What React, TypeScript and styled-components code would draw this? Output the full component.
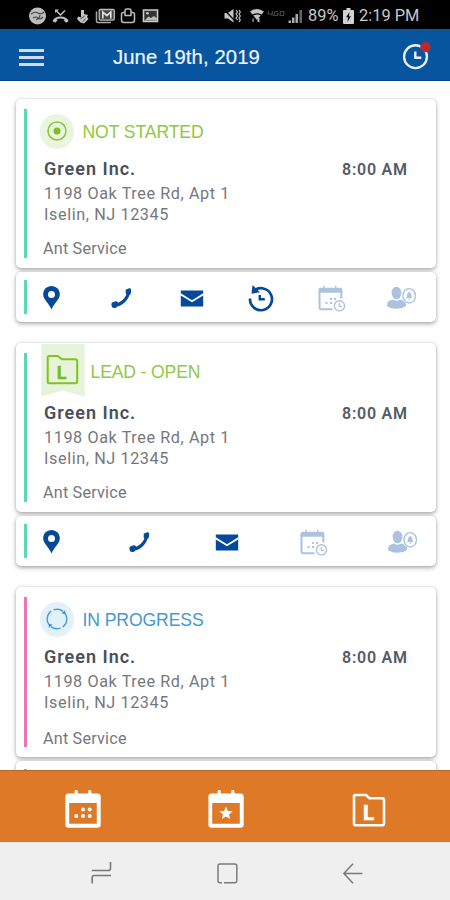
import React from 'react';
import styled, { createGlobalStyle } from 'styled-components';

const GlobalStyle = createGlobalStyle`
  * { box-sizing: border-box; }
  body { margin: 0; background: #fefefe; font-family: Roboto, sans-serif; }
  svg { display: block; flex: none; overflow: visible; }
`;

const Screen = styled.div`
  width: 450px;
  height: 900px;
  display: flex;
  flex-direction: column;
  overflow: hidden;
  background: #fefefe;
`;

const StatusBar = styled.div`
  flex: none;
  height: 29px;
  padding: 2px 30px 0 29px;
  background: #000;
  color: #c8c8c8;
  display: flex;
  align-items: center;
  justify-content: space-between;
`;

const StatusGroup = styled.div<{ $gap?: number }>`
  margin-left: ${(p) => p.$gap ?? 0}px;
  display: flex;
  align-items: center;
`;

const StatusText = styled.span<{ $width: number; $gap: number }>`
  width: ${(p) => p.$width}px;
  margin-left: ${(p) => p.$gap}px;
  font-size: 16.4px;
  line-height: 20px;
  white-space: nowrap;
`;

const Header = styled.header`
  flex: none;
  height: 52px;
  padding: 0 19px 0 19px;
  display: flex;
  align-items: center;
  background: #08559f;
  border-bottom: 1px solid #064686;
`;

const MenuButton = styled.button`
  width: 25px;
  height: 17px;
  margin-top: 6px;
  padding: 0;
  border: 0;
  background: none;
  display: flex;
  flex-direction: column;
  justify-content: space-between;
`;

const MenuLine = styled.span`
  height: 3px;
  background: #cfdcf1;
`;

const Title = styled.h1`
  flex: 1;
  margin: 4px 0 0 69px;
  color: #eef4fc;
  font: 400 20.3px/26px "Liberation Sans", Arial, sans-serif;
  -webkit-text-stroke: 0.2px #eef4fc;
  letter-spacing: 0.1px;
`;

const List = styled.main`
  flex: 1;
  min-height: 0;
  overflow: hidden;
  padding: 18px 14px 0 16px;
`;

const Job = styled.article`
  margin-bottom: 21px;
`;

const Panel = styled.section`
  background: #fff;
  border-radius: 5px;
  box-shadow: 0 2px 4px rgba(0, 0, 0, 0.3), 0 0 3px rgba(0, 0, 0, 0.12);
  display: flex;
`;

const Details = styled(Panel)<{ $height: number }>`
  height: ${(p) => p.$height}px;
  padding: 10px 29px 10px 8px;
`;

const Accent = styled.span<{ $color: string }>`
  width: 3px;
  flex: none;
  background: ${(p) => p.$color};
`;

const Body = styled.div`
  flex: 1;
  padding-left: 16px;
  display: flex;
  flex-direction: column;
`;

const StatusRow = styled.div<{ $ribbon: boolean }>`
  height: 44px;
  margin: ${(p) => (p.$ribbon ? '-10px 0 10px -2px' : '0')};
  display: flex;
  align-items: ${(p) => (p.$ribbon ? 'flex-start' : 'center')};
`;

const StatusLabel = styled.span<{ $color: string; $ribbon: boolean; $spacing: number }>`
  margin: ${(p) => (p.$ribbon ? '18px 0 0 5.5px' : '1px 0 0 8.5px')};
  color: ${(p) => p.$color};
  font: 400 17.6px/22px "Liberation Sans", Arial, sans-serif;
  letter-spacing: ${(p) => p.$spacing}px;
`;

const Badge = styled.span<{ $color: string }>`
  width: 34px;
  height: 35px;
  margin-left: -3px;
  border-radius: 50%;
  background: ${(p) => p.$color};
  display: flex;
  align-items: center;
  justify-content: center;
`;

const NameRow = styled.div`
  height: 22px;
  margin-top: 6px;
  padding-left: 1px;
  display: flex;
  align-items: center;
  justify-content: space-between;
`;

const Customer = styled.span`
  margin-top: -2px;
  color: #48505a;
  font-size: 18px;
  font-weight: 600;
  line-height: 22px;
  letter-spacing: 1px;
`;

const Time = styled.span`
  color: #555b62;
  font-size: 16px;
  font-weight: 600;
  line-height: 22px;
  letter-spacing: 0.75px;
  margin-right: -0.75px;
`;

const Address = styled.div`
  margin-top: 2px;
  padding-left: 1px;
  color: #74787d;
  font-size: 16.2px;
  line-height: 21.4px;
  letter-spacing: 0.6px;
`;

const Service = styled.div<{ $drop: number }>`
  margin-top: auto;
  margin-bottom: ${(p) => -p.$drop}px;
  color: #74787d;
  font-size: 16.2px;
  line-height: 20px;
  letter-spacing: 0.2px;
`;

const Actions = styled(Panel)`
  height: 50px;
  margin-top: 4px;
  padding: 8px 19px 8px 8px;
`;

const ActionRow = styled.div`
  flex: 1;
  margin: 2px 0 0 9.5px;
  display: flex;
  align-items: center;
  justify-content: space-between;
`;

const Action = styled.button`
  width: 30px;
  height: 34px;
  padding: 0;
  border: 0;
  background: none;
  display: flex;
  align-items: center;
  justify-content: center;
`;

const TabBar = styled.nav`
  flex: none;
  height: 72px;
  padding: 7px 64px 0 65px;
  background: #de7927;
  border-top: 1px solid #b96a2b;
  border-bottom: 1px solid #cf741f;
  display: grid;
  grid-template-columns: 142.5px 144.5px 34px;
  align-items: center;
`;

const SystemNav = styled.nav`
  flex: none;
  height: 58px;
  padding: 4px 86px 0 91px;
  background: #efefef;
  display: grid;
  grid-template-columns: 126px 126px 20px;
  align-items: center;
`;

const BLUE = '#06499b';
const PALE = '#acc3df';

const PinIcon = () => (
  <svg width="17" height="24" viewBox="0 0 17 24">
    <path fill={BLUE} fillRule="evenodd" d="M8.5 0C3.8 0 .2 3.6.2 8.2c0 5.4 5.3 8.2 8.3 15.3 3-7.1 8.3-9.900 8.300-15.300C16.800 3.600 13.200 0 8.500 0zm0 4.900a3.500 3.500 0 1 1 0 7 3.500 3.500 0 0 1 0-7z" />
  </svg>
);

const PhoneIcon = () => (
  <svg width="21" height="21" viewBox="0 0 21 21">
    <path d="M3.200 17.100C10 17.300 17.300 10.500 17.400 3.600" fill="none" stroke={BLUE} strokeWidth="3.200" />
    <path d="M1.700 14.200 4.700 13.300q1.200-.2 1.900.7l1.500 2-3 3.800Q2.500 20.300 1 19.300L.4 16.500Q.3 14.700 1.700 14.200z" fill={BLUE} />
    <path d="m14.500 1.700 3.700-1.400q1.500-.3 1.900 1.300.4 2.600-.8 5.200l-3.200.2-1.300-1.700q-.6-.9.100-1.800z" fill={BLUE} />
  </svg>
);

const MailIcon = () => (
  <svg width="24" height="17" viewBox="0 0 24 17">
    <path fill={BLUE} d="M.8.500h22.400v2.700L12 10.200.8 3.200z" />
    <path fill={BLUE} d="M.8 5.400 12 12.300l11.200-6.900v11H.8z" />
  </svg>
);

const HistoryIcon = () => (
  <svg width="27" height="28" viewBox="0 0 27 28">
    <path d="M5.900 6.800A11 11 0 1 1 2 14.500" fill="none" stroke={BLUE} strokeWidth="2.700" />
    <path d="M4.600 1 3.500 9.800l8.500-1.500z" fill={BLUE} />
    <path d="M11.800 11v4.300h5" fill="none" stroke={BLUE} strokeWidth="2.500" />
  </svg>
);

const CalendarClockIcon = () => (
  <svg width="28" height="27" viewBox="0 0 28 27">
    <path d="M14.500 24.200H3.200a1.700 1.700 0 0 1-1.700-1.700V5.500M23.300 5.500v8" fill="none" stroke={PALE} strokeWidth="2" />
    <path d="M.6 7.800V4.600Q.6 2.800 2.500 2.800h3V.5h1.300v2.300h10.300V.5h1.200v2.300h3.600q2.400 0 2.400 1.900v3.100z" fill={PALE} />
    <path d="M12 13h2v2h-2zM16 13h2v2h-2zM7.500 17h2v2h-2zM12 17h2v2h-2z" fill={PALE} />
    <circle cx="21.500" cy="20.800" r="5.100" fill="#fff" stroke={PALE} strokeWidth="1.400" />
    <path d="M21.300 18v3.300h2.700" fill="none" stroke={PALE} strokeWidth="1.200" />
  </svg>
);

const PersonIcon = () => (
  <svg width="29" height="24" viewBox="0 0 29 24">
    <ellipse cx="9.500" cy="7" rx="4.900" ry="6.300" fill={PALE} />
    <path d="M.2 20.500v-2.700q.3-2.700 3.600-3.500l2.500-.7q3.200 2.500 6.600 0l3.300 1q2.700 1 2.900 3.300v2Q15 22.800 9.600 22.800T.2 20.500z" fill={PALE} />
    <circle cx="22.200" cy="10" r="7.800" fill="#fff" />
    <ellipse cx="22.200" cy="9.800" rx="6.300" ry="7.200" fill="#fff" stroke={PALE} strokeWidth="1.400" />
    <path d="M18.900 12.300q1.200-1 1.200-3.600 0-2.400 2.100-2.800 2.100.4 2.100 2.800 0 2.600 1.200 3.600zM21.300 13h1.800v.8h-1.800z" fill={PALE} />
  </svg>
);

const TargetIcon = () => (
  <svg width="20" height="20" viewBox="0 0 20 20">
    <circle cx="10" cy="10" r="9" fill="none" stroke="#8cc63f" strokeWidth="1.500" />
    <circle cx="10" cy="10" r="3.500" fill="#79bf22" />
  </svg>
);

const CycleIcon = () => (
  <svg width="22" height="22" viewBox="0 0 22 22">
    <path d="M4.300 18A9.700 9.700 0 0 1 5.200 3.100M17.700 4A9.700 9.700 0 0 1 16.700 19" fill="none" stroke="#4a9ed7" strokeWidth="1.500" />
    <path d="M7.500 1.900q5.200-2 9.700 1.500M14.500 20.100q-5 2-9.600-1.500" fill="none" stroke="#4a9ed7" strokeWidth="1.500" />
    <path d="m19.100 2.200.2 3.800-3.800-.5zM2.700 19.900l.3-4 3.500.6z" fill="#398fc9" />
  </svg>
);

const RibbonIcon = () => (
  <svg width="44" height="54" viewBox="0 0 44 54">
    <path d="M.3 1h43.400v52.500Q32 50.500 22 47.500 12 50.500.3 53.500z" fill="#e8f3dc" />
    <path d="M8.200 13h8.600l4 3.300h13.400q2 0 2 2v20q0 2-2 2h-26q-1.500 0-1.500-1.500V14.500q0-1.500 1.500-1.500z" fill="none" stroke="#7fc41c" strokeWidth="2" />
    <text x="15.800" y="35.500" fill="#72bd22" stroke="#72bd22" strokeWidth=".5" fontFamily="Roboto, sans-serif" fontWeight="700" fontSize="18">L</text>
  </svg>
);

const TabCalendar = ({ star }: { star?: boolean }) => (
  <svg width="36" height="39" viewBox="0 0 36 39">
    <path fill="#fff" fillRule="evenodd" d="M9.600 3.500V1.300q0-1.300 1.600-1.300t1.600 1.300v2.200h10.400V1.300q0-1.300 1.600-1.300t1.600 1.300v2.200h5.900q3.400 0 3.400 3.300v27.700q0 3.300-3.400 3.300H3.700Q.4 37.800.4 34.500V6.800q0-3.300 3.300-3.300zM4.200 13v20.800h27.600V13z" />
    {star ? (
      <path fill="#fff" d="m18 16.500 1.900 4.400 4.700.4-3.600 3.100 1.100 4.700-4.100-2.500-4.100 2.500 1.100-4.700-3.600-3.100 4.700-.4z" />
    ) : (
      <g fill="#fff">
        <circle cx="18" cy="19.600" r="2" /><circle cx="24.700" cy="19.600" r="2" />
        <circle cx="11.300" cy="26" r="2" /><circle cx="18" cy="26" r="2" /><circle cx="24.700" cy="26" r="2" />
      </g>
    )}
  </svg>
);

const TabFolder = () => (
  <svg width="34" height="34" viewBox="0 0 34 34">
    <path d="M3.300 2H14l3.500 3.200H30q2 0 2 2V30.500q0 1.700-1.700 1.700H3.700Q2 32.200 2 30.500V3.500Q2 2 3.300 2z" fill="none" stroke="#fff" strokeWidth="2.600" />
    <text x="11" y="26.500" fill="#fff" stroke="#fff" strokeWidth=".7" fontFamily="Roboto, sans-serif" fontWeight="700" fontSize="20.500">L</text>
  </svg>
);

const ClockIcon = () => (
  <svg width="28" height="28" viewBox="0 0 28 28">
    <circle cx="12.500" cy="15.700" r="11.400" fill="none" stroke="#e6effa" strokeWidth="2.400" />
    <path d="M12.300 10.500v6.300h6" fill="none" stroke="#e6effa" strokeWidth="2.400" />
    <circle cx="22.500" cy="6" r="5.300" fill="#b42c30" />
  </svg>
);

const NotificationIcons = () => (
  <svg width="130" height="18" viewBox="0 0 130 18">
    <circle cx="8.500" cy="9" r="8.500" fill="#bdbdbd" />
    <path d="M2 7q4-3 7-1t6-1M4 11q3-2 5 0t5-1M7 13q4-2 4-5" fill="none" stroke="#444" strokeWidth="1.100" />
    <path d="M27 3.500 31.500 8l4.500-4.500" fill="none" stroke="#c2c2c2" strokeWidth="1.500" />
    <path d="M24.500 14.500q1.500-4 7-4t7 4" fill="none" stroke="#c2c2c2" strokeWidth="2" />
    <path d="m23.800 14 2-2.500 3 1.500-2.500 2.700zM34.500 13l3-1.500 2 2.500-2.500 1.700zM26 2.500h4L26 6z" fill="#c2c2c2" />
    <path d="M52 3h3v4l4 1-1 2 1.500 2-4.500 4.500-3.500-1-3.500-3.500 1.200-2.500 2.800 1z" fill="#c2c2c2" />
    <path d="m51.500 12 4-3M54 14.500l2.500-3" stroke="#444" strokeWidth="1" />
    <path d="M67.500 4.500V14q0 1.500 1.500 1.500h13" fill="none" stroke="#aaa" strokeWidth="1.500" />
    <path d="M71.500 2.500h12.500q1.300 0 1.300 1.300v8q0 1.300-1.300 1.300H71.500q-1.300 0-1.300-1.300v-8q0-1.300 1.300-1.300z" fill="#444" stroke="#bbb" strokeWidth="1.300" />
    <path d="M73.800 11.500V5l4 3.500 4-3.500v6.500" fill="none" stroke="#ddd" strokeWidth="1.700" />
    <path d="M96 5.500h-1.500q-2 0-2 2V13q0 2.500 2.500 2.500h8q2.500 0 2.500-2.500V7.500q0-2-2-2H102M96 8.500V4q0-2 1.500-2h3q1.500 0 1.500 2v4.500z" fill="none" stroke="#bbb" strokeWidth="1.500" />
    <path d="M114.500 3h14v11.500h-14z" fill="#333" stroke="#ccc" strokeWidth="1.600" />
    <path d="m115.500 13.500 4-4 2.500 1.500 3-2 3 2.500v2z" fill="#bbb" /><circle cx="118.500" cy="6.200" r="1.300" fill="#ccc" />
  </svg>
);

const MuteIcon = () => (
  <svg width="17" height="16" viewBox="0 0 17 16">
    <path d="M.5 5h3.500l5.500-4v13.500L4 10.500H.5z" fill="#c4c4c4" />
    <path d="m.5 2 11 11.500" stroke="#000" strokeWidth="1.200" />
    <path d="m12 2 1.500 2-1.500 2 1.500 2-1.500 2 1.500 2M15 2l1.300 2L15 6l1.300 2L15 10l1.300 2-1.300 2" fill="none" stroke="#c4c4c4" strokeWidth="1.200" />
  </svg>
);

const WifiIcon = () => (
  <svg width="14" height="15" viewBox="0 0 14 15">
    <path d="M0 3.500Q7-1.500 14 3.500L11.500 6.500Q7 4 2.500 6.500zM3.300 7.600q3.700-2 7.400 0L7 12z" fill="#c4c4c4" />
    <path d="M3 14v-3.500" stroke="#888" strokeWidth="1.500" />
    <path d="M8.500 14v-4" stroke="#bbb" strokeWidth="2" />
  </svg>
);

const CarrierIcon = () => (
  <svg width="18" height="14" viewBox="0 0 18 14" fill="none" stroke="#454545" strokeWidth="1.200">
    <path d="M1.500 2 1 5h4.500M5.500 2 5 7M11 2.500H8L7 6.500h3.500L11 4.500H9.500M13.500 2.500h3.500L16.500 6.500H13z" />
  </svg>
);

const SignalIcon = () => (
  <svg width="15" height="14" viewBox="0 0 15 14">
    <path d="M.5 11.500h2.500V14H.5zM4 8.500h2.500V14H4zM7.500 5H10v9H7.500z" fill="#a8a8a8" />
    <path d="M11.500 1H14v13h-2.500z" fill="#666" />
  </svg>
);

const BatteryIcon = () => (
  <svg width="11" height="16" viewBox="0 0 11 16">
    <path d="M3.500 0h4v2H10q1 0 1 1v12q0 1-1 1H1q-1 0-1-1V3q0-1 1-1h2.500z" fill="#d2d2d2" />
    <path d="M6.500 4 3 9.300h2L4.500 14 8 8.300H6z" fill="#111" />
  </svg>
);

const RecentsIcon = () => (
  <svg width="21" height="22" viewBox="0 0 21 22" fill="none" stroke="#777" strokeWidth="1.600">
    <path d="M.8 8.500h16.400q2.300 0 2.300-2.300V0M20 13.500H3.200Q1.200 13.500 1.200 15.500V21.500" />
  </svg>
);

const HomeIcon = () => (
  <svg width="21" height="21" viewBox="0 0 21 21" fill="none" stroke="#7c7c7c" strokeWidth="1.500">
    <path d="M5 19.800H3Q1 19.800 1 17.800V3q0-2 2-2h14.800q2 0 2 2v14.800q0 2-2 2H7" />
  </svg>
);

const BackIcon = () => (
  <svg width="20" height="21" viewBox="0 0 20 21" fill="none" stroke="#7a7a7a" strokeWidth="1.500">
    <path d="M10 .8.9 10.500 10 20.200M1 10.500h18.500" />
  </svg>
);

type Kind = 'new' | 'lead' | 'progress';

const jobs: { kind: Kind; label: string; color: string; accent: string; height: number; spacing: number; drop: number }[] = [
  { kind: 'new', label: 'NOT STARTED', color: '#8ec941', accent: '#5bd8b8', height: 169, spacing: -0.1, drop: 1 },
  { kind: 'lead', label: 'LEAD - OPEN', color: '#8ec94a', accent: '#5bd8b8', height: 169, spacing: -0.15, drop: 1 },
  { kind: 'progress', label: 'IN PROGRESS', color: '#4498d0', accent: '#ed75b6', height: 170, spacing: -0.1, drop: 2 },
];

const StatusMark = ({ kind }: { kind: Kind }) => {
  if (kind === 'lead') return <RibbonIcon />;
  if (kind === 'new') return <Badge $color="#eaf4df"><TargetIcon /></Badge>;
  return <Badge $color="#e2f0f8"><CycleIcon /></Badge>;
};

export default function App() {
  return (
    <>
      <GlobalStyle />
      <Screen>
        <StatusBar>
          <NotificationIcons />
          <StatusGroup>
            <MuteIcon />
            <StatusGroup $gap={9}><WifiIcon /></StatusGroup>
            <StatusGroup $gap={3}><CarrierIcon /></StatusGroup>
            <StatusGroup $gap={3}><SignalIcon /></StatusGroup>
            <StatusText $width={31} $gap={5}>89%</StatusText>
            <StatusGroup $gap={4}><BatteryIcon /></StatusGroup>
            <StatusText $width={61} $gap={5}>2:19 PM</StatusText>
          </StatusGroup>
        </StatusBar>
        <Header>
          <MenuButton aria-label="Menu"><MenuLine /><MenuLine /><MenuLine /></MenuButton>
          <Title>June 19th, 2019</Title>
          <ClockIcon />
        </Header>
        <List>
          {jobs.map((job) => (
            <Job key={job.kind}>
              <Details $height={job.height}>
                <Accent $color={job.accent} />
                <Body>
                  <StatusRow $ribbon={job.kind === 'lead'}>
                    <StatusMark kind={job.kind} />
                    <StatusLabel $color={job.color} $ribbon={job.kind === 'lead'} $spacing={job.spacing}>{job.label}</StatusLabel>
                  </StatusRow>
                  <NameRow><Customer>Green Inc.</Customer><Time>8:00 AM</Time></NameRow>
                  <Address>1198 Oak Tree Rd, Apt 1<br />Iselin, NJ 12345</Address>
                  <Service $drop={job.drop}>Ant Service</Service>
                </Body>
              </Details>
              <Actions>
                <Accent $color={job.accent} />
                <ActionRow>
                  <Action aria-label="Map"><PinIcon /></Action>
                  <Action aria-label="Call"><PhoneIcon /></Action>
                  <Action aria-label="Mail"><MailIcon /></Action>
                  {job.kind === 'new' && <Action aria-label="History"><HistoryIcon /></Action>}
                  <Action aria-label="Schedule"><CalendarClockIcon /></Action>
                  <Action aria-label="Notify"><PersonIcon /></Action>
                </ActionRow>
              </Actions>
            </Job>
          ))}
        </List>
        <TabBar>
          <TabCalendar />
          <TabCalendar star />
          <TabFolder />
        </TabBar>
        <SystemNav>
          <RecentsIcon />
          <HomeIcon />
          <BackIcon />
        </SystemNav>
      </Screen>
    </>
  );
}
